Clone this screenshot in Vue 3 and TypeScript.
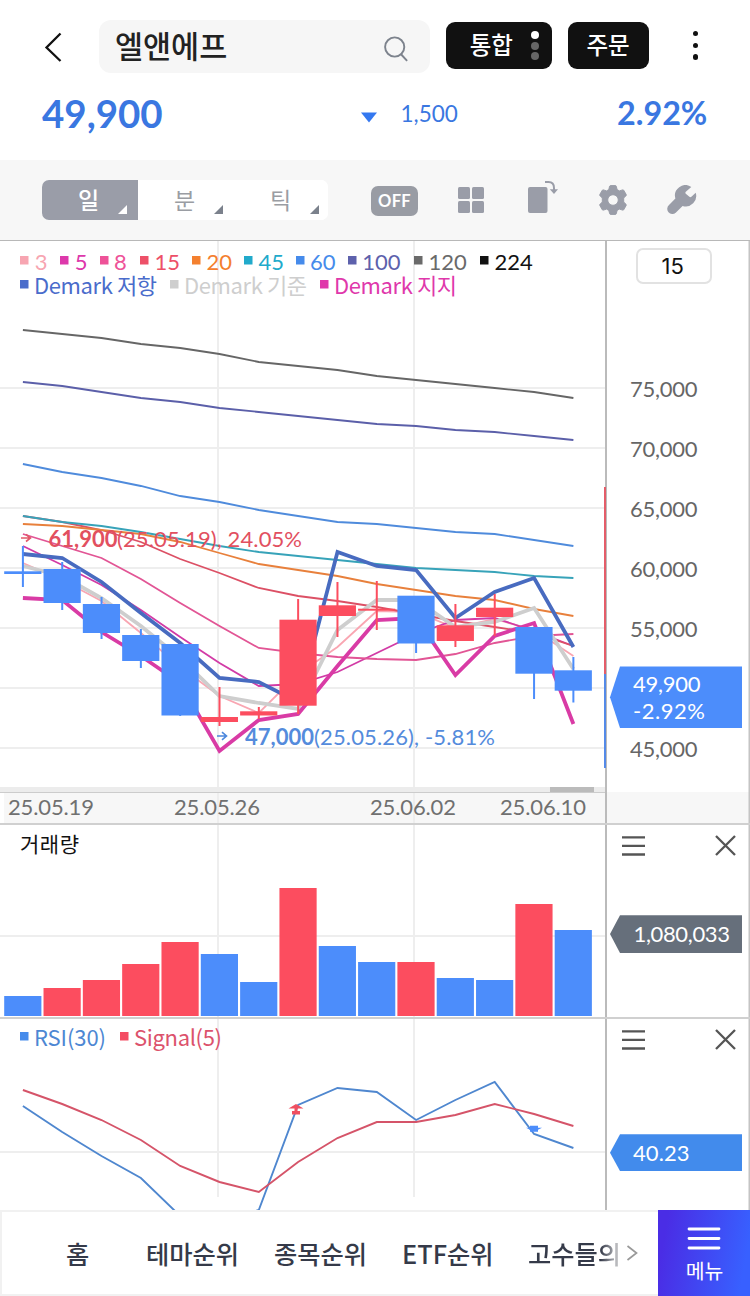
<script setup lang="ts">
interface Series { color: string; width: number; values: number[] }
interface Candle { up: boolean; top: number; bottom: number; high: number; low: number }
interface Legend { label: string; color: string; box: number; x: number; width?: number }

const RED = '#fc4d5f'
const BLUE = '#4c8dfb'

const xAt = (i: number): number => 22.9 + i * 39.32
const points = (values: number[]): string =>
  values.map((y, i) => `${xAt(i).toFixed(1)},${y}`).join(' ')

const series: Series[] = [
  { color: '#666666', width: 1.8, values: [330, 334, 338, 344, 348, 354, 362, 366, 370, 376, 380, 384, 388, 392, 398] },
  { color: '#5b5fa9', width: 1.8, values: [382, 386, 392, 398, 402, 408, 412, 416, 420, 424, 426, 430, 432, 436, 440] },
  { color: '#4f8bdc', width: 1.8, values: [464, 472, 478, 486, 496, 502, 510, 516, 522, 524, 528, 532, 534, 540, 546] },
  { color: '#f9a6b2', width: 1.8, values: [563, 580, 601, 633, 667, 696, 713, 674, 647, 611, 612, 628, 619, 630, 656] },
  { color: '#d23ba6', width: 1.8, values: [546, 565, 585, 610, 637, 663, 686, 684, 672, 653, 634, 620, 618, 631, 646] },
  { color: '#e25595', width: 1.8, values: [534, 546, 558, 579, 603, 626, 648, 653, 657, 659, 660, 654, 643, 636, 634] },
  { color: '#dc5065', width: 1.8, values: [516, 522, 530, 542, 559, 573, 588, 596, 601, 607, 614, 621, 627, 633, 646] },
  { color: '#e8803c', width: 1.8, values: [524, 526, 530, 534, 542, 553, 564, 570, 576, 584, 590, 596, 600, 609, 616] },
  { color: '#37a3b9', width: 1.8, values: [516, 522, 526, 532, 539, 546, 552, 556, 560, 564, 568, 570, 572, 576, 578] },
  { color: '#cecece', width: 3.8, values: [566, 576, 598, 626, 658, 696, 703, 709, 630, 600, 600, 627, 622, 608, 669] },
  { color: '#486bc0', width: 3.8, values: [554, 558, 582, 613, 643, 678, 682, 702, 552, 566, 570, 618, 592, 578, 647] },
  { color: '#d93ba5', width: 3.8, values: [598, 600, 632, 656, 683, 751, 720, 714, 666, 620, 618, 675, 636, 623, 724] },
]

const candles: Candle[] = [
  { up: false, top: 571.3, bottom: 574, high: 546, low: 587 },
  { up: false, top: 569, bottom: 603, high: 562, low: 610 },
  { up: false, top: 604, bottom: 633, high: 597, low: 639 },
  { up: false, top: 635, bottom: 661, high: 629, low: 668 },
  { up: false, top: 644, bottom: 715.5, high: 644, low: 716 },
  { up: true, top: 717, bottom: 722, high: 687, low: 726 },
  { up: true, top: 711.3, bottom: 715.5, high: 707, low: 719 },
  { up: true, top: 619.7, bottom: 705.7, high: 599, low: 714 },
  { up: true, top: 605.3, bottom: 616, high: 582, low: 637 },
  { up: true, top: 608.7, bottom: 610.7, high: 581, low: 630 },
  { up: false, top: 595.7, bottom: 643.5, high: 596, low: 653 },
  { up: true, top: 625.3, bottom: 641, high: 604, low: 647 },
  { up: true, top: 607.7, bottom: 617, high: 594, low: 636 },
  { up: false, top: 627, bottom: 673.7, high: 627, low: 699 },
  { up: false, top: 670.3, bottom: 690.7, high: 657, low: 702.5 },
]

const volumes: { up: boolean; top: number }[] = [
  { up: false, top: 996 }, { up: true, top: 988 }, { up: true, top: 980 },
  { up: true, top: 964 }, { up: true, top: 942 }, { up: false, top: 954 },
  { up: false, top: 982 }, { up: true, top: 888 }, { up: false, top: 946 },
  { up: false, top: 962 }, { up: true, top: 962 }, { up: false, top: 978 },
  { up: false, top: 980 }, { up: true, top: 904 }, { up: false, top: 930 },
]

const rsi: number[] = [1106, 1132, 1156, 1178, 1216, 1222, 1210, 1105, 1088, 1092, 1120, 1100, 1082, 1134, 1148]
const signal: number[] = [1090, 1104, 1120, 1140, 1166, 1182, 1192, 1162, 1138, 1122, 1122, 1115, 1104, 1114, 1126]

const averages: Legend[] = [
  { label: '3', color: '#f7a5b1', box: 20, x: 34.7 },
  { label: '5', color: '#dd38ab', box: 60, x: 74.7 },
  { label: '8', color: '#ee5298', box: 100, x: 114 },
  { label: '15', color: '#ed5068', box: 140, x: 154.5 },
  { label: '20', color: '#f4802f', box: 192, x: 206.5 },
  { label: '45', color: '#21aacb', box: 244, x: 258.5 },
  { label: '60', color: '#468beb', box: 296, x: 310 },
  { label: '100', color: '#5d61ac', box: 348, x: 362.3 },
  { label: '120', color: '#6a6a6a', box: 414, x: 428.5 },
  { label: '224', color: '#111111', box: 480, x: 494.5 },
]
const demarks: Legend[] = [
  { label: 'Demark 저항', color: '#4a6ccb', box: 20, x: 34, width: 123 },
  { label: 'Demark 기준', color: '#cecece', box: 170, x: 184, width: 123 },
  { label: 'Demark 지지', color: '#df38ab', box: 320, x: 334, width: 123 },
]
const gridRows: number[] = [388, 448, 508, 568, 628, 688, 748]
const prices: { label: string; y: number }[] = [
  { label: '75,000', y: 397 }, { label: '70,000', y: 457 }, { label: '65,000', y: 517 },
  { label: '60,000', y: 577 }, { label: '55,000', y: 637 }, { label: '45,000', y: 757 },
]
const dates: { label: string; x: number }[] = [
  { label: '25.05.19', x: 8 }, { label: '25.05.26', x: 174 },
  { label: '25.06.02', x: 370 }, { label: '25.06.10', x: 500 },
]
const periods: string[] = ['일', '분', '틱']
const tabs: { label: string; cls: string }[] = [
  { label: '홈', cls: 'home' }, { label: '테마순위', cls: 'theme' }, { label: '종목순위', cls: 'stock' },
  { label: 'ETF순위', cls: 'etf' }, { label: '고수들의', cls: 'expert' },
]
</script>

<template>
  <main class="app">
    <header class="header">
      <div class="search-row">
        <svg class="back" width="24" height="32" viewBox="0 0 24 32"><path d="M19.500 2.500 5.500 16.500 19.500 30" fill="none" stroke="#111" stroke-width="2.300" /></svg>
        <div class="search">
          <span>엘앤에프</span>
          <svg width="24" height="26" viewBox="0 0 24 26" fill="none" stroke="#7d838d" stroke-width="1.900"><circle cx="10.700" cy="11" r="9.600" /><path d="m16.800 18 6.300 6.800" /></svg>
        </div>
        <button class="dark market">통합<span class="lights"><i class="on" /><i /><i /></span></button>
        <button class="dark order">주문</button>
        <div class="kebab"><i /><i /><i /></div>
      </div>
      <div class="quote-row">
        <strong class="price">49,900</strong>
        <svg class="down" width="16" height="11" viewBox="0 0 16 11"><path d="M0 .5h16L8 10.500z" fill="#3478f0" /></svg>
        <span class="diff">1,500</span>
        <strong class="rate">2.92%</strong>
      </div>
    </header>

    <nav class="toolbar">
      <div class="periods">
        <button v-for="(p, i) in periods" :key="p" :class="{ active: i === 0 }">{{ p }}<i /></button>
      </div>
      <span class="off">OFF</span>
      <svg class="grid-icon" width="26" height="26" viewBox="0 0 26 26" fill="#9a9da8"><rect width="12" height="12" rx="1.500" /><rect x="14" width="12" height="12" rx="1.500" /><rect y="14" width="12" height="12" rx="1.500" /><rect x="14" y="14" width="12" height="12" rx="1.500" /></svg>
      <svg class="rotate-icon" width="32" height="34" viewBox="0 0 32 34"><rect x="1" y="7" width="19.500" height="26" rx="2" fill="#9a9da8" /><path d="M18 2h3.500q5.500 0 5.500 6v2" fill="none" stroke="#9a9da8" stroke-width="2" /><path d="M22.800 9.200h8.200L27 14z" fill="#9a9da8" /></svg>
      <svg class="gear-icon" width="30" height="30" viewBox="0 0 30 30"><path fill="#9a9da8" stroke="#9a9da8" stroke-width="1" stroke-linejoin="round" fill-rule="evenodd" d="M11.600 1.200Q11.900.6 12.600.6h4.800q.7 0 .9.700l.8 3.300 2.200 1.300 3.400-1q.7-.2 1 .4l2.500 4.200q.4.700-.2 1.200l-2.300 2.300v4l2.300 2.300q.5.500.2 1.100l-2.500 4.300q-.3.600-1 .4l-3.400-1-2.200 1.300-.8 3.300q-.2.700-.9.700h-4.800q-.7 0-.9-.7l-.9-3.300-2.200-1.300-3.300 1q-.7.200-1-.4l-2.500-4.300q-.4-.6.200-1.100L4.300 17v-4L2 10.700q-.6-.5-.2-1.200l2.500-4.200q.3-.6 1-.4l3.300 1 2.200-1.300zM15 9.700a5.300 5.300 0 1 0 0 10.600 5.300 5.300 0 0 0 0-10.600z" /></svg>
      <svg class="wrench-icon" width="30" height="30" viewBox="0 0 30 30"><path fill="#9a9da8" d="M24.300 1.900A10.500 10.500 0 0 0 8.400 13.600L2 20a4.800 4.800 0 0 0 6.700 7.700l6.900-6.800A10.500 10.500 0 0 0 28.700 7.700l-4.300 4.100q-1 .9-2 0L18.800 8.700q-.9-1 0-2z" /></svg>
    </nav>

    <section class="panel main-panel">
      <svg class="plot" width="605" height="582" viewBox="0 241 605 582">
        <g fill="#eeeeee"><rect v-for="y in gridRows" :key="y" x="0" :y="y - 1" width="605" height="2" /><rect x="217" y="241" width="2" height="546" /><rect x="413" y="241" width="2" height="546" /></g>
        <g class="legend num">
          <template v-for="l in averages" :key="l.label"><rect :x="l.box" y="256" width="8.500" height="8.500" :fill="l.color" /><text :x="l.x" y="270" :fill="l.color">{{ l.label }}</text></template>
        </g>
        <g class="legend kr">
          <template v-for="l in demarks" :key="l.label"><rect :x="l.box" y="280" width="8.500" height="8.500" :fill="l.color" /><text :x="l.x" y="294" :fill="l.color" :textLength="l.width">{{ l.label }}</text></template>
        </g>
        <polyline v-for="(s, i) in series" :key="i" :points="points(s.values)" fill="none" :stroke="s.color" :stroke-width="s.width" />
        <g v-for="(c, i) in candles" :key="i" :fill="c.up ? RED : BLUE">
          <rect :x="xAt(i) - 1" :y="c.high" width="2" :height="c.low - c.high" />
          <rect :x="xAt(i) - 18.700" :y="c.top" width="37.200" :height="c.bottom - c.top" />
        </g>
        <path d="M21 538h9m-4-3.500 4.500 3.500-4.500 3.500" fill="none" stroke="#e2596a" stroke-width="1.600" />
        <g class="num" fill="#e2505f"><text class="bold" x="48.500" y="547" textLength="69">61,900</text><text x="117" y="547" textLength="185">(25.05.19), 24.05%</text></g>
        <path d="M217 736h9m-4-3.800 4.500 3.800-4.500 3.800" fill="none" stroke="#4b87dc" stroke-width="1.600" />
        <g class="num" fill="#548bdc"><text class="bold" x="245" y="745" textLength="69">47,000</text><text x="314" y="745" textLength="181">(25.05.26), -5.81%</text></g>
        <rect x="604" y="487" width="2" height="187" fill="#e45d69" /><rect x="604" y="674" width="2" height="94" fill="#548ae8" />
        <rect x="0" y="787" width="605" height="5" fill="#ececec" /><rect x="550" y="787" width="44" height="5" fill="#bbbbbb" />
        <rect x="4" y="793" width="601" height="30" fill="#f7f7f7" /><rect x="0" y="792" width="605" height="1" fill="#cccccc" />
        <rect x="217" y="793" width="2" height="30" fill="#eeeeee" /><rect x="413" y="793" width="2" height="30" fill="#eeeeee" />
        <text v-for="d in dates" :key="d.label" class="num" :x="d.x" y="815" fill="#707070" textLength="86">{{ d.label }}</text>
      </svg>
      <svg class="axis" width="145" height="582" viewBox="605 241 145 582">
        <rect x="605" y="792" width="145" height="31" fill="#f7f7f7" />
        <rect x="605" y="241" width="2" height="582" fill="#bbbbbb" /><rect x="748.500" y="241" width="1.500" height="582" fill="#c4c4c4" />
        <rect x="604" y="487" width="2" height="187" fill="#e45d69" /><rect x="604" y="674" width="2" height="94" fill="#548ae8" />
        <rect x="637" y="249" width="74" height="34" rx="6" fill="#fff" stroke="#e2e2e2" stroke-width="2" />
        <text class="count" x="661.500" y="274">15</text>
        <text v-for="p in prices" :key="p.label" class="num" x="630" :y="p.y" fill="#666" textLength="67.500">{{ p.label }}</text>
        <path d="M620 666.500h122v61.500H620l-10-30.700z" fill="#4c8dfb" />
        <g class="num" fill="#fff"><text x="633" y="691.500" textLength="67.500">49,900</text><text x="633" y="719" textLength="72">-2.92%</text></g>
      </svg>
    </section>

    <section class="panel volume-panel">
      <svg class="plot" width="605" height="192" viewBox="0 825 605 192">
        <g fill="#eeeeee"><rect x="0" y="935" width="605" height="2" /><rect x="217" y="825" width="2" height="192" /><rect x="413" y="825" width="2" height="192" /></g>
        <text class="kr volume-title" x="20" y="851.500" fill="#111" textLength="59">거래량</text>
        <rect v-for="(v, i) in volumes" :key="i" :x="xAt(i) - 18.700" :y="v.top" width="37.200" :height="1016 - v.top" :fill="v.up ? RED : BLUE" />
      </svg>
      <svg class="axis" width="145" height="192" viewBox="605 825 145 192">
        <rect x="605" y="825" width="2" height="192" fill="#bbbbbb" /><rect x="748.500" y="825" width="1.500" height="192" fill="#c4c4c4" />
        <path d="M622 837.300h23m-23 8.500h23m-23 8.700h23M716 836l19 19m0-19-19 19" fill="none" stroke="#555" stroke-width="2.300" />
        <path d="M620 915.300h122V953H620l-10-19z" fill="#666f7b" />
        <text class="num" x="633.500" y="942" fill="#fff" textLength="96.500">1,080,033</text>
      </svg>
    </section>

    <section class="panel rsi-panel">
      <svg class="plot" width="605" height="191" viewBox="0 1019 605 191">
        <g fill="#eeeeee"><rect x="0" y="1151" width="605" height="2" /><rect x="217" y="1019" width="2" height="178" /><rect x="413" y="1019" width="2" height="178" /></g>
        <rect x="20" y="1032" width="8.500" height="8.500" fill="#468beb" /><text class="kr" x="34" y="1046" fill="#4d87d3" textLength="72">RSI(30)</text>
        <rect x="120" y="1032" width="8.500" height="8.500" fill="#f44c63" /><text class="kr" x="134" y="1046" fill="#dc526c" textLength="88">Signal(5)</text>
        <polyline :points="points(rsi)" fill="none" stroke="#4f87cf" stroke-width="1.900" />
        <polyline :points="points(signal)" fill="none" stroke="#d55469" stroke-width="1.900" />
        <path d="m296 1104 7.500 4.500h-15zM294.500 1108h3v3h2.500v3.500h-8V1111h2.500z" fill="#ef4f61" />
        <path d="M530 1125.700h8v2h4l-4 2v2h-8v-2l-4-2h4z" fill="#4c8dfb" />
      </svg>
      <svg class="axis" width="145" height="191" viewBox="605 1019 145 191">
        <rect x="605" y="1019" width="2" height="191" fill="#bbbbbb" /><rect x="748.500" y="1019" width="1.500" height="191" fill="#c4c4c4" />
        <path d="M622 1031.300h23m-23 8.500h23m-23 8.700h23M716 1030l19 19m0-19-19 19" fill="none" stroke="#555" stroke-width="2.300" />
        <path d="M620 1134.300h122V1171H620l-10-18.300z" fill="#428bec" />
        <text class="num" x="633" y="1160.500" fill="#fff" textLength="56.500">40.23</text>
      </svg>
    </section>

    <footer class="bottom">
      <div class="tabs"><span v-for="t in tabs" :key="t.label" :class="t.cls">{{ t.label }}</span></div>
      <svg class="more" width="14" height="18" viewBox="0 0 14 18"><path d="m2.500 2 9 7-9 7" fill="none" stroke="#999" stroke-width="1.700" /></svg>
      <button class="menu">
        <svg width="34" height="24" viewBox="0 0 34 24"><path d="M2 2h30M2 11.500h30M2 21h30" stroke="#fff" stroke-width="2.800" stroke-linecap="round" /></svg>
        <span>메뉴</span>
      </button>
    </footer>
  </main>
</template>

<style>
body { margin: 0; background: #fff; }
</style>

<style scoped>
.app { width: 750px; height: 1296px; overflow: hidden; background: #fff; font-family: Lato, "Noto Sans CJK KR", sans-serif; }
button { border: 0; padding: 0; margin: 0; font-family: "Noto Sans CJK KR", sans-serif; }
svg { display: block; flex: none; }
.header { height: 160px; }
.search-row { display: flex; height: 88px; align-items: flex-start; }
.back { margin: 31px 0 0 41px; }
.search { box-sizing: border-box; display: flex; justify-content: space-between; align-items: center; width: 331px; height: 53px; margin: 20px 16px 0 34px; padding: 0 22px 0 16px; border-radius: 12px; background: #f6f6f6; }
.search span { font: 500 30.500px/50px "Noto Sans CJK KR", sans-serif; color: #222; padding-bottom: 3px; }
.search svg { margin-top: 4px; }
.dark { box-sizing: border-box; height: 47px; margin-top: 22px; border-radius: 9px; background: #111; color: #fff; font-size: 23.500px; font-weight: 500; line-height: 44px; }
.market { display: flex; width: 106px; justify-content: flex-end; gap: 18px; padding-right: 13px; }
.order { width: 81px; margin-left: 16px; padding: 0 1px 4px 0; }
.lights { display: flex; flex-direction: column; gap: 2.700px; margin-top: 9px; }
.lights i { width: 8px; height: 8px; border-radius: 50%; background: #666; }
.lights .on { background: #fff; }
.kebab { display: flex; flex-direction: column; gap: 6.300px; margin: 31px 0 0 43.500px; }
.kebab i { width: 5.400px; height: 5.400px; border-radius: 50%; background: #111; }
.quote-row { display: flex; height: 50px; align-items: center; color: #3a77e1; }
.price { width: 319px; padding-left: 42px; font-size: 38.500px; line-height: 48px; margin-top: -1px; }
.down { margin-top: 9px; }
.diff { margin-left: 23.500px; width: 216.500px; font-size: 22.500px; line-height: 30px; margin-top: 2px; }
.rate { font-size: 32.300px; line-height: 40px; }
.toolbar { box-sizing: border-box; display: flex; align-items: flex-start; height: 81px; padding-left: 42px; background: #f7f7f7; border-bottom: 1px solid #b8b8b8; }
.periods { display: flex; width: 286px; height: 40px; margin-top: 20px; border-radius: 7px; overflow: hidden; background: #fff; }
.periods button { position: relative; flex: none; width: 96px; height: 40px; padding: 0 3px 1px 0; font-size: 23px; line-height: 37px; background: #fff; color: #9a9da3; }
.periods .active { background: #9a9da8; color: #fff; font-weight: 500; }
.periods i { position: absolute; right: 11px; bottom: 6px; width: 9px; height: 9px; background: #7b818c; clip-path: polygon(100% 0, 100% 100%, 0 100%); }
.periods .active i { background: #fff; }
.off { width: 47px; height: 30px; margin: 26px 0 0 43px; border-radius: 7px; background: #999ca4; color: #fff; font-weight: 700; font-size: 16.500px; line-height: 30px; text-align: center; letter-spacing: .3px; }
.grid-icon { margin: 27px 0 0 40px; }
.rotate-icon { margin: 20px 0 0 43px; }
.gear-icon { margin: 25px 0 0 39px; }
.wrench-icon { margin: 25px 0 0 39px; }
.panel { display: flex; box-sizing: border-box; }
.main-panel { height: 582px; }
.volume-panel { height: 194px; border-top: 2px solid #d0d0d0; }
.rsi-panel { height: 193px; border-top: 2px solid #d0d0d0; overflow: hidden; }
.num { font-family: Lato, sans-serif; font-size: 22px; }
.kr { font-family: "Noto Sans CJK KR", sans-serif; font-size: 22px; }
.volume-title { font-size: 21px; }
.bold { font-weight: 700; }
.count { font-family: Inter, sans-serif; font-size: 22px; fill: #111; }
.bottom { box-sizing: border-box; display: flex; height: 86px; border: solid #f1f1f1; border-width: 2px 0 2px 2px; background: #fff; }
.tabs { display: flex; width: 620px; overflow: hidden; white-space: nowrap; font: 500 25.300px/83px "Noto Sans CJK KR", sans-serif; color: #353a49; }
.tabs span { flex: none; }
.home { width: 80px; margin-left: 64px; }
.theme { width: 128px; }
.stock { width: 128px; }
.etf { width: 126px; }
.expert { background: linear-gradient(90deg, #353a49 78%, #ddd 100%); background-clip: text; color: transparent; }
.more { margin: 32px 0 0 3px; }
.menu { display: flex; flex-direction: column; align-items: center; width: 92px; height: 86px; margin: -2px 0 0 19px; background: linear-gradient(100deg, #4a2de5 10%, #3860ff 90%); color: #fff; }
.menu svg { margin-top: 17px; }
.menu span { font-size: 20.500px; line-height: 30px; margin: 4px 0 0 1px; }
</style>
